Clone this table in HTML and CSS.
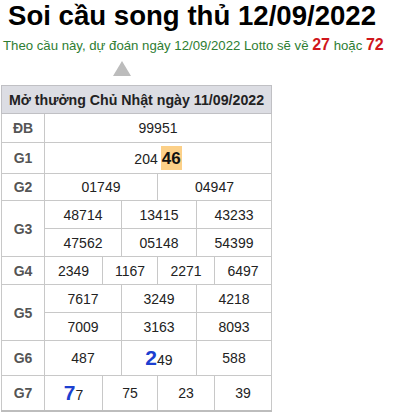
FILE: index.html
```html
<!DOCTYPE html>
<html lang="vi">
<head>
<meta charset="utf-8">
<title>Soi cầu song thủ</title>
<link rel="stylesheet" href="styles.css">
</head>
<body>
<h1 class="title">Soi cầu song thủ 12/09/2022</h1>
<p class="predict">Theo cầu này, dự đoán ngày 12/09/2022 Lotto sẽ về <b class="hot">27</b> hoặc <b class="hot">72</b></p>
<div class="arrow"></div>
<table class="kq">
<colgroup>
<col class="c-lbl">
<col class="c19"><col class="c19"><col class="c20"><col class="c19"><col class="c18"><col class="c18">
<col class="c20"><col class="c19"><col class="c18"><col class="c19"><col class="c19"><col class="c19">
</colgroup>
<thead>
<tr><th colspan="13" class="head">Mở thưởng Chủ Nhật ngày 11/09/2022</th></tr>
</thead>
<tbody>
<tr class="r29"><td class="lbl">ĐB</td><td colspan="12">99951</td></tr>
<tr class="r31"><td class="lbl">G1</td><td colspan="12">204<span class="hl">46</span></td></tr>
<tr class="r27"><td class="lbl">G2</td><td colspan="6">01749</td><td colspan="6">04947</td></tr>
<tr><td class="lbl" rowspan="2">G3</td><td colspan="4">48714</td><td colspan="4">13415</td><td colspan="4">43233</td></tr>
<tr><td colspan="4">47562</td><td colspan="4">05148</td><td colspan="4">54399</td></tr>
<tr><td class="lbl">G4</td><td colspan="3">2349</td><td colspan="3">1167</td><td colspan="3">2271</td><td colspan="3">6497</td></tr>
<tr><td class="lbl" rowspan="2">G5</td><td colspan="4">7617</td><td colspan="4">3249</td><td colspan="4">4218</td></tr>
<tr><td colspan="4">7009</td><td colspan="4">3163</td><td colspan="4">8093</td></tr>
<tr class="r35"><td class="lbl">G6</td><td colspan="4">487</td><td colspan="4"><span class="big">2</span>49</td><td colspan="4">588</td></tr>
<tr class="r35"><td class="lbl">G7</td><td colspan="3"><span class="big">7</span>7</td><td colspan="3">75</td><td colspan="3">23</td><td colspan="3">39</td></tr>
</tbody>
</table>
</body>
</html>
```
FILE: styles.css
```css
body {
  margin: 0;
  font-family: "Liberation Sans", Arial, sans-serif;
  color: #222;
  background: #fff;
}
.title {
  margin: 0;
  padding: 1px 0 0 8px;
  font-size: 27.6px;
  line-height: 30px;
  font-weight: bold;
  color: #000;
}
.predict {
  margin: 3px 0 0 3px;
  font-size: 13.2px;
  line-height: 22px;
  color: #2e7d32;
}
.hot {
  color: #d0161b;
  font-size: 16px;
}
.arrow {
  width: 0;
  height: 0;
  margin: 4px 0 9px 113px;
  border-left: 9px solid transparent;
  border-right: 9px solid transparent;
  border-bottom: 15px solid #bcbcbc;
}
.kq {
  margin-left: 1px;
  border-collapse: collapse;
  table-layout: fixed;
  width: 271px;
  border-bottom: 2px solid #bdbdbd;
  font-size: 14px;
}
.c-lbl { width: 43px; }
.c18 { width: 18px; }
.c19 { width: 19px; }
.c20 { width: 20px; }
.kq th, .kq td {
  border: 1px solid #c8c8c8;
  text-align: center;
  padding: 0;
  height: 27px;
  white-space: nowrap;
}
.kq .head {
  background: #dcdde3;
  font-size: 14.2px;
  font-weight: bold;
  color: #222;
  height: 27px;
  border-color: #c0c0c4;
}
.kq .lbl {
  font-weight: bold;
  color: #555;
}
.kq .r29 td { height: 28px; }
.kq .r31 td { height: 30px; }
.kq .r27 td { height: 26px; }
.kq .r35 td { height: 34px; }
.hl {
  display: inline-block;
  background: #fcd088;
  font-weight: bold;
  font-size: 17px;
  color: #111;
  padding: 2px 1px 1px;
  margin-left: 3px;
  line-height: 21px;
}
.big {
  color: #1c3fd0;
  font-weight: bold;
  font-size: 21px;
}
```
